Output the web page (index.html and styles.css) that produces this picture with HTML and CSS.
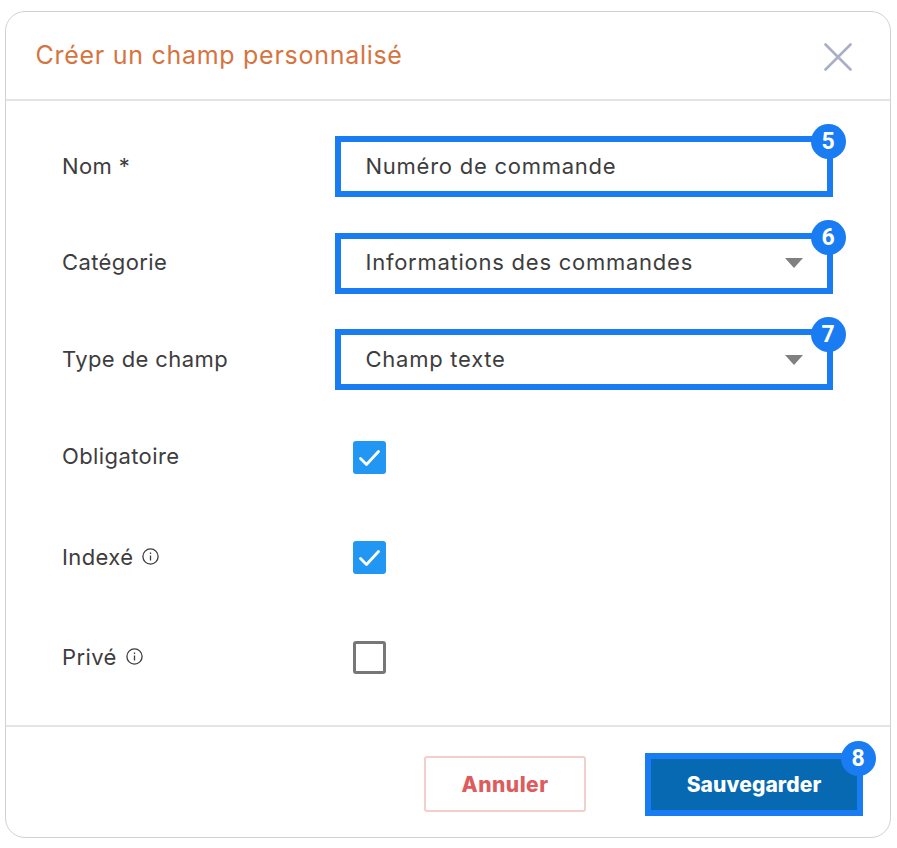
FILE: index.html
```html
<!DOCTYPE html>
<html lang="fr">
<head>
<meta charset="utf-8">
<title>Créer un champ personnalisé</title>
<link rel="stylesheet" href="styles.css">
</head>
<body>
<section class="card">
  <header class="head">
    <h1 class="title">Créer un champ personnalisé</h1>
    <svg class="close" viewBox="0 0 28 28" aria-hidden="true"><path d="M1.5 1.5 26.5 26.5M26.5 1.5 1.5 26.5"/></svg>
  </header>
  <div class="form">
    <div class="row field-row">
      <span class="label">Nom *</span>
      <div class="field"><span class="value">Numéro de commande</span><span class="badge">5</span></div>
    </div>
    <div class="row field-row">
      <span class="label">Catégorie</span>
      <div class="field"><span class="value">Informations des commandes</span><span class="caret"></span><span class="badge">6</span></div>
    </div>
    <div class="row field-row">
      <span class="label">Type de champ</span>
      <div class="field"><span class="value">Champ texte</span><span class="caret"></span><span class="badge">7</span></div>
    </div>
    <div class="row check-row first-check">
      <span class="label">Obligatoire</span>
      <span class="check on"><svg viewBox="0 0 33 33" aria-hidden="true"><path d="M7.5 17.5 13.5 23.5 25.5 10.5"/></svg></span>
    </div>
    <div class="row check-row">
      <span class="label">Indexé <svg class="info" viewBox="0 0 17 17" aria-hidden="true"><circle cx="8.5" cy="8.5" r="7.6"/><path d="M8.5 7.5V12.6M8.5 4.4V5.9"/></svg></span>
      <span class="check on"><svg viewBox="0 0 33 33" aria-hidden="true"><path d="M7.5 17.5 13.5 23.5 25.5 10.5"/></svg></span>
    </div>
    <div class="row check-row">
      <span class="label">Privé <svg class="info" viewBox="0 0 17 17" aria-hidden="true"><circle cx="8.5" cy="8.5" r="7.6"/><path d="M8.5 7.5V12.6M8.5 4.4V5.9"/></svg></span>
      <span class="check"></span>
    </div>
  </div>
  <footer class="foot">
    <button class="btn cancel" type="button">Annuler</button>
    <button class="btn save" type="button">Sauvegarder<span class="badge">8</span></button>
  </footer>
</section>
</body>
</html>
```

FILE: styles.css
```css
* { box-sizing: border-box; }
html, body { margin: 0; height: 100%; background: #fff; }
body {
  padding: 11px 6px 10px 5px;
  font-family: Inter, "Open Sans", sans-serif;
  color: #3d3d3d;
}
.card {
  height: 827px;
  border: 1px solid #d2d2d2;
  border-radius: 20px;
  display: flex;
  flex-direction: column;
  background: #fff;
}
.head {
  height: 89px;
  flex: none;
  display: flex;
  align-items: center;
  justify-content: space-between;
  padding: 0 38px 0 29.5px;
  border-bottom: 2px solid #e4e4e4;
}
.title {
  margin: -2px 0 0;
  font-size: 25px;
  font-weight: 400;
  letter-spacing: 0.72px;
  color: #d5743f;
}
.close { width: 28px; height: 28px; margin-top: 3px; }
.close path { fill: none; stroke: #a9afc6; stroke-width: 2.6; stroke-linecap: round; }
.form {
  flex: 1;
  padding: 35px 0 0 56px;
  display: flex;
  flex-direction: column;
}
.row { display: flex; align-items: center; }
.label {
  width: 273px;
  flex: none;
  font-size: 22px;
  display: flex;
  align-items: center;
  gap: 9px;
  letter-spacing: 0.4px;
  margin-top: -2px;
}
.field-row { height: 61px; margin-bottom: 35.5px; }
.field-row + .first-check { margin-top: 15.5px; }
.check-row { height: 33px; margin-bottom: 67px; }
.check-row:last-child { margin-bottom: 0; }
.first-check .label { margin-top: -4px; }
.field {
  position: relative;
  width: 498px;
  height: 100%;
  border: 6.5px solid #1a7cf2;
  padding: 0 21.5px 0 24.5px;
  display: flex;
  align-items: center;
  justify-content: space-between;
}
.value { font-size: 22px; letter-spacing: 0.75px; color: #3d3d3d; margin-top: -2px; }
.caret {
  width: 0;
  height: 0;
  margin-right: 2.5px;
  border-left: 9px solid transparent;
  border-right: 9px solid transparent;
  border-top: 10px solid #808080;
}
.badge {
  position: absolute;
  top: -18.5px;
  right: -18.5px;
  width: 35px;
  height: 35px;
  border-radius: 50%;
  background: #1a7cf2;
  color: #fff;
  font-family: Roboto, sans-serif;
  font-weight: 700;
  font-size: 23px;
  line-height: 35px;
  letter-spacing: 0;
  text-align: center;
}
.check {
  width: 33px;
  height: 33px;
  margin-left: 18px;
  border: 3px solid #777;
  border-radius: 3px;
  display: block;
}
.check.on { background: #2196f3; border: 0; }
.check svg { display: block; width: 33px; height: 33px; }
.check path { fill: none; stroke: #fff; stroke-width: 2.8; stroke-linecap: round; stroke-linejoin: round; }
.info { width: 17px; height: 17px; flex: none; }
.info circle, .info path { fill: none; stroke: #3d3d3d; stroke-width: 1.3; }
.foot {
  height: 112px;
  flex: none;
  border-top: 2px solid #e4e4e4;
  display: flex;
  align-items: flex-start;
  padding-left: 418px;
}
.btn {
  font-family: Inter, sans-serif;
  font-weight: 800;
  font-size: 21px;
  background: #fff;
  display: block;
}
.cancel {
  width: 162px;
  height: 56px;
  margin-top: 29px;
  border: 2px solid #f2cfcb;
  border-radius: 3px;
  color: #dd5c5c;
  letter-spacing: 0.5px;
}
.save {
  position: relative;
  width: 218px;
  height: 63px;
  margin-top: 26px;
  margin-left: 59px;
  border: 6.5px solid #1a7cf2;
  background: #0669b2;
  color: #fff;
  padding: 0;
  letter-spacing: 0.1px;
}
```
